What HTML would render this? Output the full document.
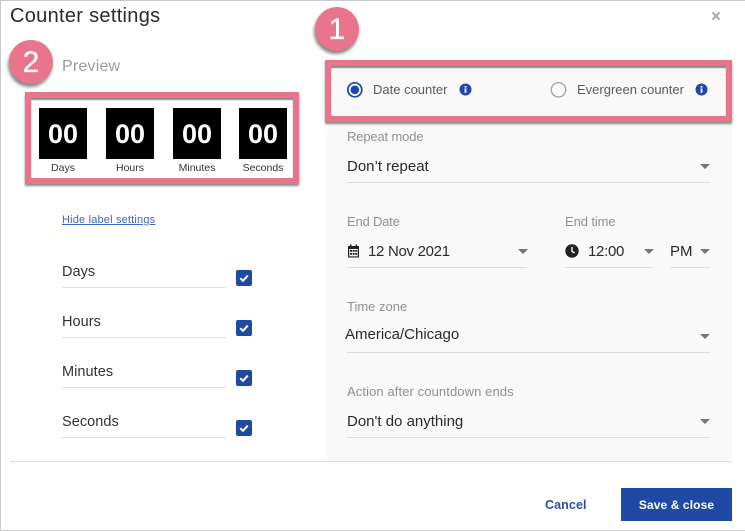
<!DOCTYPE html>
<html><head><meta charset="utf-8">
<style>
html,body{margin:0;padding:0}
body{width:745px;height:531px;background:#fff;position:relative;overflow:hidden;font-family:"Liberation Sans",sans-serif;color:#2b2b2b}
#w{position:absolute;left:0;top:0;width:745px;height:531px;filter:blur(.3px)}
.a{position:absolute}
.t{position:absolute;white-space:nowrap;line-height:1}
.lab{font-size:13px;color:#8f8f8f}
.val{font-size:15px;color:#2a2a2a}
.line{position:absolute;height:1px;background:#dedede}
.tri{position:absolute;width:0;height:0;border-left:5px solid transparent;border-right:5px solid transparent;border-top:5px solid #757575}
.blk{position:absolute;top:108px;width:48px;height:51px;background:#000;color:#fff;font-weight:bold;font-size:27px;line-height:52px;text-align:center}
.cap{position:absolute;top:162px;width:66px;text-align:center;font-size:10.5px;line-height:12px;color:#333}
.pink{position:absolute;box-sizing:border-box;border:6px solid #e9758c;box-shadow:0 2px 2px rgba(60,60,60,.6), inset 0 2px 1px rgba(60,60,60,.6)}
.num{position:absolute;width:44px;height:44px;border-radius:50%;background:#e9758c;box-shadow:-1px 3px 3px rgba(50,50,50,.6);color:#fff;font-size:30px;line-height:45px;text-align:center;-webkit-text-stroke:.3px #fff}
.cb{position:absolute;left:236px;width:16px;height:16px;background:#2049a5;border-radius:2px}
.fl{position:absolute;left:62px;font-size:14.5px;color:#333;letter-spacing:.05px;line-height:1;white-space:nowrap}
</style></head>
<body>
<div id="w">
<div class="a" style="left:0;top:0;width:745px;height:1px;background:#c9c9c9"></div>
<div class="a" style="left:0;top:0;width:1px;height:531px;background:#c9c9c9"></div>
<div class="a" style="left:0;top:530px;width:745px;height:1px;background:#c9c9c9"></div>

<div class="a" style="left:325px;top:60px;width:407px;height:401px;background:#f9f9f9"></div>
<div class="a" style="left:10px;top:461px;width:722px;height:1px;background:#dedede"></div>

<div class="t" style="left:10px;top:6px;font-size:20px;letter-spacing:.3px;color:#2b2b2b">Counter settings</div>
<svg class="a" style="left:711px;top:11px" width="10" height="10" viewBox="0 0 10 10"><path d="M1.5 1.5L8.5 8.5M8.5 1.5L1.5 8.5" stroke="#a9a9a9" stroke-width="2"/></svg>

<div class="t" style="left:62px;top:59px;font-size:16px;letter-spacing:.2px;color:#9a9a9a">Preview</div>

<div class="blk" style="left:39px">00</div>
<div class="blk" style="left:106px">00</div>
<div class="blk" style="left:173px">00</div>
<div class="blk" style="left:239px">00</div>
<div class="cap" style="left:30px">Days</div>
<div class="cap" style="left:97px">Hours</div>
<div class="cap" style="left:164px">Minutes</div>
<div class="cap" style="left:230px">Seconds</div>

<div class="pink" style="left:25px;top:92px;width:274px;height:92px"></div>
<div class="pink" style="left:325px;top:60px;width:407px;height:62px"></div>

<div class="num" style="left:315px;top:7px">1</div>
<div class="num" style="left:9px;top:40px">2</div>

<div class="t" style="left:62px;top:215px;font-size:11px;color:#3f66bd;text-decoration:underline;letter-spacing:.18px">Hide label settings</div>

<div class="fl" style="top:265px">Days</div>
<div class="line" style="left:62px;top:287px;width:164px"></div>
<div class="cb" style="top:269.5px"><svg width="16" height="16" viewBox="0 0 16 16"><path d="M4.2 8.2L7 10.8L11.8 5.6" fill="none" stroke="#fff" stroke-width="2"/></svg></div>
<div class="fl" style="top:315px">Hours</div>
<div class="line" style="left:62px;top:337px;width:164px"></div>
<div class="cb" style="top:319.5px"><svg width="16" height="16" viewBox="0 0 16 16"><path d="M4.2 8.2L7 10.8L11.8 5.6" fill="none" stroke="#fff" stroke-width="2"/></svg></div>
<div class="fl" style="top:365px">Minutes</div>
<div class="line" style="left:62px;top:387px;width:164px"></div>
<div class="cb" style="top:369.5px"><svg width="16" height="16" viewBox="0 0 16 16"><path d="M4.2 8.2L7 10.8L11.8 5.6" fill="none" stroke="#fff" stroke-width="2"/></svg></div>
<div class="fl" style="top:415px">Seconds</div>
<div class="line" style="left:62px;top:437px;width:164px"></div>
<div class="cb" style="top:419.5px"><svg width="16" height="16" viewBox="0 0 16 16"><path d="M4.2 8.2L7 10.8L11.8 5.6" fill="none" stroke="#fff" stroke-width="2"/></svg></div>

<svg class="a" style="left:346px;top:81px" width="18" height="18" viewBox="0 0 18 18"><circle cx="8.8" cy="8.8" r="7" fill="none" stroke="#2049a5" stroke-width="1.7"/><circle cx="8.8" cy="8.8" r="4.3" fill="#2049a5"/></svg>
<div class="t" style="left:373px;top:83px;font-size:13px;color:#5a5a5a">Date counter</div>
<svg class="a" style="left:459px;top:83px" width="13" height="13" viewBox="0 0 13 13"><circle cx="6.5" cy="6.5" r="6" fill="#2049a5"/><rect x="5.6" y="5.4" width="1.8" height="4.4" fill="#fff"/><rect x="5.6" y="3" width="1.8" height="1.6" fill="#fff"/></svg>
<svg class="a" style="left:550px;top:81px" width="18" height="18" viewBox="0 0 18 18"><circle cx="8.5" cy="8.8" r="7.2" fill="none" stroke="#a3a3a3" stroke-width="1.3"/></svg>
<div class="t" style="left:577px;top:83px;font-size:13px;color:#5a5a5a">Evergreen counter</div>
<svg class="a" style="left:695px;top:83px" width="13" height="13" viewBox="0 0 13 13"><circle cx="6.5" cy="6.5" r="6" fill="#2049a5"/><rect x="5.6" y="5.4" width="1.8" height="4.4" fill="#fff"/><rect x="5.6" y="3" width="1.8" height="1.6" fill="#fff"/></svg>

<div class="t lab" style="left:347px;top:130px;letter-spacing:-.15px">Repeat mode</div>
<div class="t val" style="left:347px;top:159px">Don’t repeat</div>
<div class="tri" style="left:700px;top:164px"></div>
<div class="line" style="left:347px;top:182px;width:363px"></div>

<div class="t lab" style="left:347px;top:215px;letter-spacing:-.2px">End Date</div>
<svg class="a" style="left:347px;top:244px" width="13" height="14" viewBox="0 0 13 14"><path fill-rule="evenodd" fill="#222" d="M1 2H3V.5H4.5V2H8.5V.5H10V2H12V13.5H1ZM2.2 5V12.4H10.8V5Z"/><path fill="#222" d="M3 6h2v1.8H3zM5.6 6h2v1.8H5.6zM8.2 6h2v1.8H8.2zM3 9h2v1.8H3zM5.6 9h2v1.8H5.6zM8.2 9h2v1.8H8.2z"/></svg>
<div class="t val" style="left:368px;top:244px;letter-spacing:-.3px">12 Nov 2021</div>
<div class="tri" style="left:518px;top:249px"></div>
<div class="line" style="left:347px;top:267px;width:180px"></div>

<div class="t lab" style="left:565px;top:215px;letter-spacing:-.1px">End time</div>
<svg class="a" style="left:565px;top:244px" width="14" height="14" viewBox="0 0 14 14"><circle cx="7" cy="7" r="6.7" fill="#222"/><path d="M7 3V7.4L9.6 9" fill="none" stroke="#fff" stroke-width="1.4"/></svg>
<div class="t val" style="left:588px;top:244px;letter-spacing:-.3px">12:00</div>
<div class="tri" style="left:644px;top:249px"></div>
<div class="line" style="left:565px;top:267px;width:88px"></div>
<div class="t val" style="left:670px;top:244px">PM</div>
<div class="tri" style="left:700px;top:249px"></div>
<div class="line" style="left:670px;top:267px;width:40px"></div>

<div class="t lab" style="left:347px;top:300px">Time zone</div>
<div class="t val" style="left:345px;top:327px">America/Chicago</div>
<div class="tri" style="left:700px;top:334px"></div>
<div class="line" style="left:347px;top:352px;width:363px"></div>

<div class="t lab" style="left:347px;top:385px;letter-spacing:.1px">Action after countdown ends</div>
<div class="t val" style="left:347px;top:414px">Don't do anything</div>
<div class="tri" style="left:700px;top:419px"></div>
<div class="line" style="left:347px;top:437px;width:363px"></div>

<div class="t" style="left:545px;top:499px;font-size:12.5px;font-weight:bold;color:#2a4fa3;letter-spacing:.1px">Cancel</div>
<div class="a" style="left:621px;top:488px;width:111px;height:33px;background:#2049a5;color:#fff;font-size:12px;font-weight:bold;line-height:34px;text-align:center;letter-spacing:.1px">Save &amp; close</div>
</div>
</body></html>
